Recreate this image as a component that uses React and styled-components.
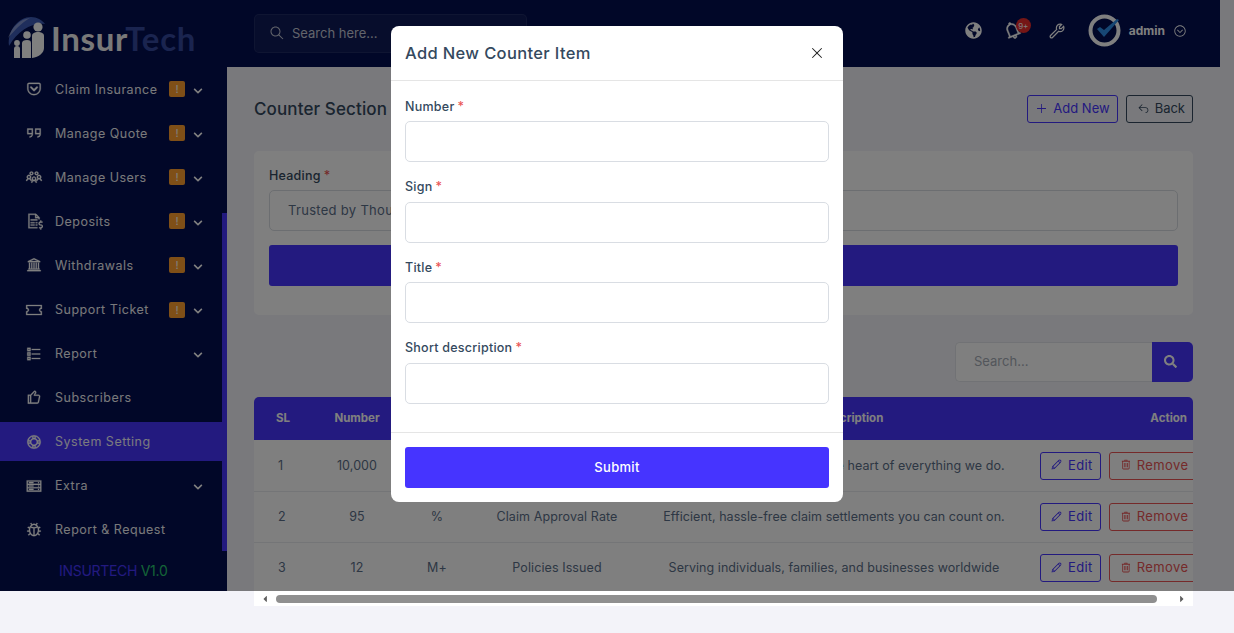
import React from 'react';
import styled, { createGlobalStyle } from 'styled-components';
import { FaGlobeAmericas, FaSearch, FaCaretLeft, FaCaretRight, FaChevronDown } from 'react-icons/fa';
import {
  LiaGetPocket, LiaQuoteRightSolid, LiaUsersSolid, LiaFileInvoiceDollarSolid,
  LiaUniversitySolid, LiaTicketAltSolid, LiaListSolid, LiaThumbsUpSolid,
  LiaLifeRingSolid, LiaServerSolid, LiaBugSolid, LiaSearchSolid,
  LiaBell, LiaWrenchSolid, LiaPlusSolid, LiaReplySolid, LiaPenSolid, LiaTrashAltSolid,
  LiaTimesSolid, LiaChevronCircleDownSolid,
} from 'react-icons/lia';

const menu = [
  { label: 'Claim Insurance', icon: LiaGetPocket, badge: true, arrow: true },
  { label: 'Manage Quote', icon: LiaQuoteRightSolid, badge: true, arrow: true },
  { label: 'Manage Users', icon: LiaUsersSolid, badge: true, arrow: true },
  { label: 'Deposits', icon: LiaFileInvoiceDollarSolid, badge: true, arrow: true },
  { label: 'Withdrawals', icon: LiaUniversitySolid, badge: true, arrow: true },
  { label: 'Support Ticket', icon: LiaTicketAltSolid, badge: true, arrow: true },
  { label: 'Report', icon: LiaListSolid, arrow: true },
  { label: 'Subscribers', icon: LiaThumbsUpSolid },
  { label: 'System Setting', icon: LiaLifeRingSolid, active: true },
  { label: 'Extra', icon: LiaServerSolid, arrow: true },
  { label: 'Report & Request', icon: LiaBugSolid },
];

const rows = [
  { sl: 1, number: '10,000', sign: '+', title: 'Happy Clients', text: 'Customer satisfaction is at the heart of everything we do.' },
  { sl: 2, number: '95', sign: '%', title: 'Claim Approval Rate', text: 'Efficient, hassle-free claim settlements you can count on.' },
  { sl: 3, number: '12', sign: 'M+', title: 'Policies Issued', text: 'Serving individuals, families, and businesses worldwide' },
];

const fields = ['Number', 'Sign', 'Title', 'Short description'];

const App = () => (
  <>
    <GlobalStyle />
    <Shell>
      <Sidebar>
        <Logo>
          <svg width="40" height="44" viewBox="0 0 40 44">
            <path d="M2 30C0 14 12 1 24 1c6 0 11 3 14 7-12-2-27 6-36 22z" fill="#3f5db8" />
            <path d="M1 22C5 10 14 3 23 2 14 7 7 15 1 22z" fill="#ffffff" opacity=".35" />
            <circle cx="31" cy="11" r="4.6" fill="#fff" />
            <path d="M25 20c0-3 3-4 6-4s6 1 6 4v12c0 5-5 9-12 10z" fill="#fff" />
            <circle cx="20" cy="19" r="3.8" fill="#fff" />
            <path d="M15 27c0-2 2-3 5-3s4 1 4 3v15h-9z" fill="#fff" />
            <circle cx="10" cy="27" r="2.9" fill="#fff" />
            <path d="M7 33c0-2 1-3 3-3s3 1 3 3v9H7z" fill="#fff" />
          </svg>
          <LogoText>Insur<span>Tech</span></LogoText>
        </Logo>
        <Menu>
          {menu.map(item => (
            <MenuItem key={item.label} $active={item.active}>
              <MenuIcon><item.icon /></MenuIcon>
              <MenuLabel>{item.label}</MenuLabel>
              {item.badge && <Badge>!</Badge>}
              {item.arrow && <Arrow><FaChevronDown /></Arrow>}
            </MenuItem>
          ))}
        </Menu>
        <Version>INSURTECH <span>V1.0</span></Version>
        <SideThumb />
      </Sidebar>
      <Main>
        <Topbar>
          <TopSearch>
            <SearchGlyph><LiaSearchSolid /></SearchGlyph>
            Search here...
          </TopSearch>
          <TopActions>
            <GlobeIcon><FaGlobeAmericas /></GlobeIcon>
            <BellWrap>
              <LiaBell />
              <BellCount>9+</BellCount>
            </BellWrap>
            <WrenchIcon><LiaWrenchSolid /></WrenchIcon>
            <Profile>
              <svg width="33" height="33" viewBox="0 0 33 33">
                <circle cx="16.5" cy="16.5" r="14" fill="none" stroke="#fff" strokeWidth="4" />
                <path d="M9 15l7 8L31 6l-2-1-13 11-4-3z" fill="#2f8fe8" />
              </svg>
              <ProfileName>admin</ProfileName>
              <ProfileArrow><LiaChevronCircleDownSolid /></ProfileArrow>
            </Profile>
          </TopActions>
        </Topbar>
        <Content>
          <PageHead>
            <PageTitle>Counter Section</PageTitle>
            <HeadButtons>
              <OutlineButton $tone="#4634ff" $left={7}><LiaPlusSolid /> Add New</OutlineButton>
              <OutlineButton $tone="#34495e" $left={10}><LiaReplySolid /> Back</OutlineButton>
            </HeadButtons>
          </PageHead>
          <Card>
            <Label>Heading<Req>*</Req></Label>
            <Input defaultValue="Trusted by Thousands of Customers Worldwide" $indent />
            <SolidButton $spaced>Submit</SolidButton>
          </Card>
          <TableSearch>
            <TableSearchInput placeholder="Search..." />
            <TableSearchButton><FaSearch /></TableSearchButton>
          </TableSearch>
          <TableWrap>
            <Table>
              <colgroup>
                {[58, 90, 70, 170, 384, 183].map(w => <col key={w} width={w} />)}
              </colgroup>
              <thead>
                <tr>
                  <Th>SL</Th>
                  <Th>Number</Th>
                  <Th>Sign</Th>
                  <Th>Title</Th>
                  <Th>Short Description</Th>
                  <Th>Action</Th>
                </tr>
              </thead>
              <tbody>
                {rows.map(row => (
                  <tr key={row.sl}>
                    <Td>{row.sl}</Td>
                    <Td>{row.number}</Td>
                    <Td>{row.sign}</Td>
                    <Td>{row.title}</Td>
                    <Td>{row.text}</Td>
                    <Td>
                      <RowActions>
                        <RowButton $tone="#4634ff"><LiaPenSolid /> Edit</RowButton>
                        <RowButton $tone="#ea5455"><LiaTrashAltSolid /> Remove</RowButton>
                      </RowActions>
                    </Td>
                  </tr>
                ))}
              </tbody>
            </Table>
          </TableWrap>
          <ScrollStrip>
            <FaCaretLeft />
            <ScrollThumb />
            <FaCaretRight />
          </ScrollStrip>
        </Content>
      </Main>
    </Shell>
    <Backdrop>
      <Modal>
        <ModalHeader>
          <ModalTitle>Add New Counter Item</ModalTitle>
          <CloseButton><LiaTimesSolid /></CloseButton>
        </ModalHeader>
        <ModalBody>
          {fields.map(field => (
            <FormGroup key={field}>
              <Label>{field}<Req>*</Req></Label>
              <Input />
            </FormGroup>
          ))}
        </ModalBody>
        <ModalFooter>
          <SolidButton>Submit</SolidButton>
        </ModalFooter>
      </Modal>
    </Backdrop>
  </>
);

const GlobalStyle = createGlobalStyle`
  html, body {
    margin: 0;
    height: 100%;
    overflow: hidden;
    background: #f3f3f9;
    font-family: "Inter", "Noto Sans", sans-serif;
  }
  * {
    box-sizing: border-box;
  }
`;

const Shell = styled.div`
  display: flex;
  align-items: flex-start;
  height: 633px;
  overflow: hidden;
`;

const Sidebar = styled.aside`
  position: relative;
  width: 227px;
  height: 591px;
  flex-shrink: 0;
  background: #020e50;
`;

const Logo = styled.div`
  display: flex;
  align-items: center;
  gap: 3px;
  height: 67px;
  padding: 8px 0 0 7px;
`;

const LogoText = styled.div`
  margin-left: 1px;
  font-family: "Lato", sans-serif;
  font-size: 33px;
  font-weight: 700;
  letter-spacing: 0.7px;
  color: #f2f2f2;

  span {
    color: #34499f;
  }
`;

const Menu = styled.nav`
  display: flex;
  flex-direction: column;
`;

const MenuItem = styled.div`
  display: flex;
  align-items: center;
  height: 39px;
  margin: 2.55px 5px 2.55px 0;
  padding: 0 22px;
  background: ${p => (p.$active ? '#4634ff' : 'transparent')};
  color: #ffffff;
`;

const MenuIcon = styled.span`
  display: flex;
  justify-content: center;
  width: 23px;
  margin-right: 10px;
  font-size: 18px;

  svg {
    stroke: currentColor;
    stroke-width: 0.5;
  }
`;

const MenuLabel = styled.span`
  flex: 1;
  font-size: 12.5px;
  letter-spacing: 0.5px;
  opacity: 0.95;
`;

const Badge = styled.span`
  display: flex;
  align-items: center;
  justify-content: center;
  width: 16px;
  height: 16px;
  margin-right: 8px;
  margin-left: -1px;
  border-radius: 2px;
  background: #ff9f2e;
  font-size: 11px;
`;

const Arrow = styled.span`
  display: flex;
  width: 14px;
  margin: 3px -7px 0 0;
  font-size: 10px;
`;

const Version = styled.div`
  margin-top: 10px;
  padding-left: 59px;
  font-size: 14px;
  letter-spacing: -0.3px;
  color: #4634ff;

  span {
    color: #28c76f;
  }
`;

const SideThumb = styled.div`
  position: absolute;
  top: 213px;
  right: 0;
  width: 5px;
  height: 338px;
  background: #4634ff;
`;

const Main = styled.main`
  width: 993px;
  flex-shrink: 0;
`;

const Topbar = styled.header`
  display: flex;
  align-items: center;
  justify-content: space-between;
  height: 67px;
  padding: 0 0 0 27px;
  background: #020e50;
`;

const TopSearch = styled.div`
  display: flex;
  align-items: center;
  width: 273px;
  height: 39px;
  margin-top: -1px;
  padding-left: 14px;
  border: 1px solid rgba(255, 255, 255, 0.07);
  border-radius: 5px;
  background: rgba(255, 255, 255, 0.05);
  color: #c5c8d6;
  font-size: 13px;
`;

const SearchGlyph = styled.span`
  display: flex;
  margin-right: 7px;
  font-size: 16px;
  transform: scaleX(-1);
`;

const TopActions = styled.div`
  display: flex;
  align-items: center;
  margin-top: -6px;
  color: #ffffff;
`;

const GlobeIcon = styled.span`
  display: flex;
  margin: -1px 20px 0 0;
  font-size: 17px;
`;

const BellWrap = styled.span`
  position: relative;
  display: flex;
  margin-right: 24px;
  font-size: 21px;

  svg {
    stroke: currentColor;
    stroke-width: 0.6;
    transform: rotate(-22deg);
  }
`;

const BellCount = styled.span`
  position: absolute;
  top: -2px;
  right: -8px;
  display: flex;
  align-items: center;
  justify-content: center;
  width: 15px;
  height: 15px;
  border-radius: 50%;
  background: #ea2c2c;
  font-size: 8px;
`;

const WrenchIcon = styled.span`
  display: flex;
  margin-right: 21px;
  font-size: 20px;
`;

const Profile = styled.div`
  display: flex;
  align-items: center;
  margin-right: 33px;
`;

const ProfileName = styled.span`
  margin-left: 8px;
  margin-right: 8px;
  font-size: 12px;
  font-weight: 700;
`;

const ProfileArrow = styled.span`
  display: flex;
  font-size: 14px;
`;

const Content = styled.div`
  padding: 28px 27px 0;
`;

const PageHead = styled.div`
  display: flex;
  align-items: center;
  justify-content: space-between;
  height: 28px;
  margin-bottom: 28px;
`;

const PageTitle = styled.h1`
  margin: 0;
  font-size: 17px;
  font-weight: 500;
  letter-spacing: 0.12px;
  color: #34495e;
`;

const HeadButtons = styled.div`
  display: flex;
  gap: 8px;
`;

const OutlineButton = styled.button`
  display: flex;
  align-items: center;
  gap: 5px;
  height: 28px;
  padding: 0 7px 2px ${p => p.$left}px;
  border: 1px solid ${p => p.$tone};
  border-radius: 3px;
  background: transparent;
  color: ${p => p.$tone};
  font: 400 13px "Inter", sans-serif;
`;

const Card = styled.section`
  height: 164px;
  padding: 13.5px 15px 0;
  border-radius: 5px;
  background: #ffffff;
`;

const Label = styled.label`
  display: block;
  height: 21px;
  margin-bottom: 4.5px;
  font-size: 12.5px;
  font-weight: 500;
  line-height: 21px;
  letter-spacing: 0.25px;
  color: #34495e;
`;

const Req = styled.span`
  margin-left: 3px;
  color: #ea5455;
`;

const Input = styled.input`
  display: block;
  width: 100%;
  height: 41px;
  padding: 0 ${p => (p.$indent ? '18px' : '12px')} 2px;
  border: 1px solid #d9dde3;
  border-radius: 5px;
  background: #ffffff;
  color: #5b6e88;
  font: 400 13px "Inter", sans-serif;
  letter-spacing: 0.3px;
  outline: none;
`;

const SolidButton = styled.button`
  display: block;
  width: 100%;
  height: 41px;
  margin-top: ${p => (p.$spaced ? '14px' : '0')};
  padding: 0 0 2px;
  border: 0;
  border-radius: 3px;
  background: #4634ff;
  color: #ffffff;
  font: 500 13px "Inter", sans-serif;
  letter-spacing: 0.3px;
`;

const TableSearch = styled.div`
  display: flex;
  width: 238px;
  height: 40px;
  margin: 27px 0 15px auto;
`;

const TableSearchInput = styled.input`
  flex: 1;
  min-width: 0;
  padding: 0 18px 2px;
  border: 1px solid #e3e5ea;
  border-right: 0;
  border-radius: 5px 0 0 5px;
  background: #ffffff;
  font: 400 13px "Inter", sans-serif;
  outline: none;

  &::placeholder {
    color: #a6acb6;
  }
`;

const TableSearchButton = styled.button`
  display: flex;
  align-items: center;
  justify-content: center;
  width: 41px;
  padding: 0 4px 2px 0;
  border: 0;
  border-radius: 0 5px 5px 0;
  background: #4634ff;
  color: #ffffff;
  font-size: 13px;
`;

const TableWrap = styled.div`
  height: 194px;
  overflow: hidden;
  border-radius: 5px 5px 0 0;
  background: #ffffff;
`;

const Table = styled.table`
  width: 955px;
  table-layout: fixed;
  border-collapse: collapse;
`;

const Th = styled.th`
  height: 43px;
  padding: 0 0 2px;
  background: #4634ff;
  color: #ffffff;
  font-size: 11.5px;
  font-weight: 700;
  text-align: center;

  &:first-child {
    padding-left: 22px;
    text-align: left;
  }
  &:last-child {
    padding-right: 22px;
    text-align: right;
  }
`;

const Td = styled.td`
  height: 51px;
  padding: 0;
  border-bottom: 1px solid #e8eaee;
  color: #5b6e88;
  font-size: 12.5px;
  letter-spacing: 0.1px;
  text-align: center;

  &:first-child {
    padding-left: 24px;
    text-align: left;
  }
  &:nth-child(5) {
    letter-spacing: 0.05px;
  }
`;

const RowActions = styled.div`
  display: flex;
  gap: 8px;
  margin-top: 1px;
  padding-left: 14px;
`;

const RowButton = styled.button`
  display: flex;
  flex-shrink: 0;
  align-items: center;
  gap: 5px;
  height: 28px;
  padding: 0 7px 2px 9px;
  border: 1px solid ${p => p.$tone};
  border-radius: 3px;
  background: transparent;
  color: ${p => p.$tone};
  font: 400 13px "Inter", sans-serif;
  letter-spacing: 0.4px;
`;

const ScrollStrip = styled.div`
  display: flex;
  align-items: center;
  height: 15px;
  padding: 0 6px;
  background: #ffffff;
  color: #5f5f5f;
  font-size: 10px;
`;

const ScrollThumb = styled.div`
  width: 882px;
  height: 8px;
  margin: 0 20px 0 6px;
  border-radius: 4px;
  background: #8f8f8f;
`;

const Backdrop = styled.div`
  position: fixed;
  top: 0;
  left: 0;
  right: 0;
  height: 591px;
  display: flex;
  justify-content: center;
  align-items: flex-start;
  padding-top: 26px;
  background: rgba(0, 0, 0, 0.5);
`;

const Modal = styled.div`
  width: 452px;
  height: 476px;
  border-radius: 8px;
  background: #ffffff;
`;

const ModalHeader = styled.div`
  display: flex;
  align-items: center;
  justify-content: space-between;
  height: 55px;
  padding: 0 19px 0 14px;
  border-bottom: 1px solid #e5e5e5;
`;

const ModalTitle = styled.h5`
  margin: 0;
  font-size: 16.5px;
  font-weight: 500;
  letter-spacing: 0.35px;
  color: #34495e;
`;

const CloseButton = styled.span`
  display: flex;
  margin-right: -1px;
  font-size: 16px;
  color: #222;
`;

const ModalBody = styled.div`
  display: flex;
  flex-direction: column;
  gap: 14px;
  height: 352px;
  padding: 14.5px 14px 0;
  border-bottom: 1px solid #e5e5e5;
`;

const FormGroup = styled.div``;

const ModalFooter = styled.div`
  padding: 14px;
`;

export default App;
